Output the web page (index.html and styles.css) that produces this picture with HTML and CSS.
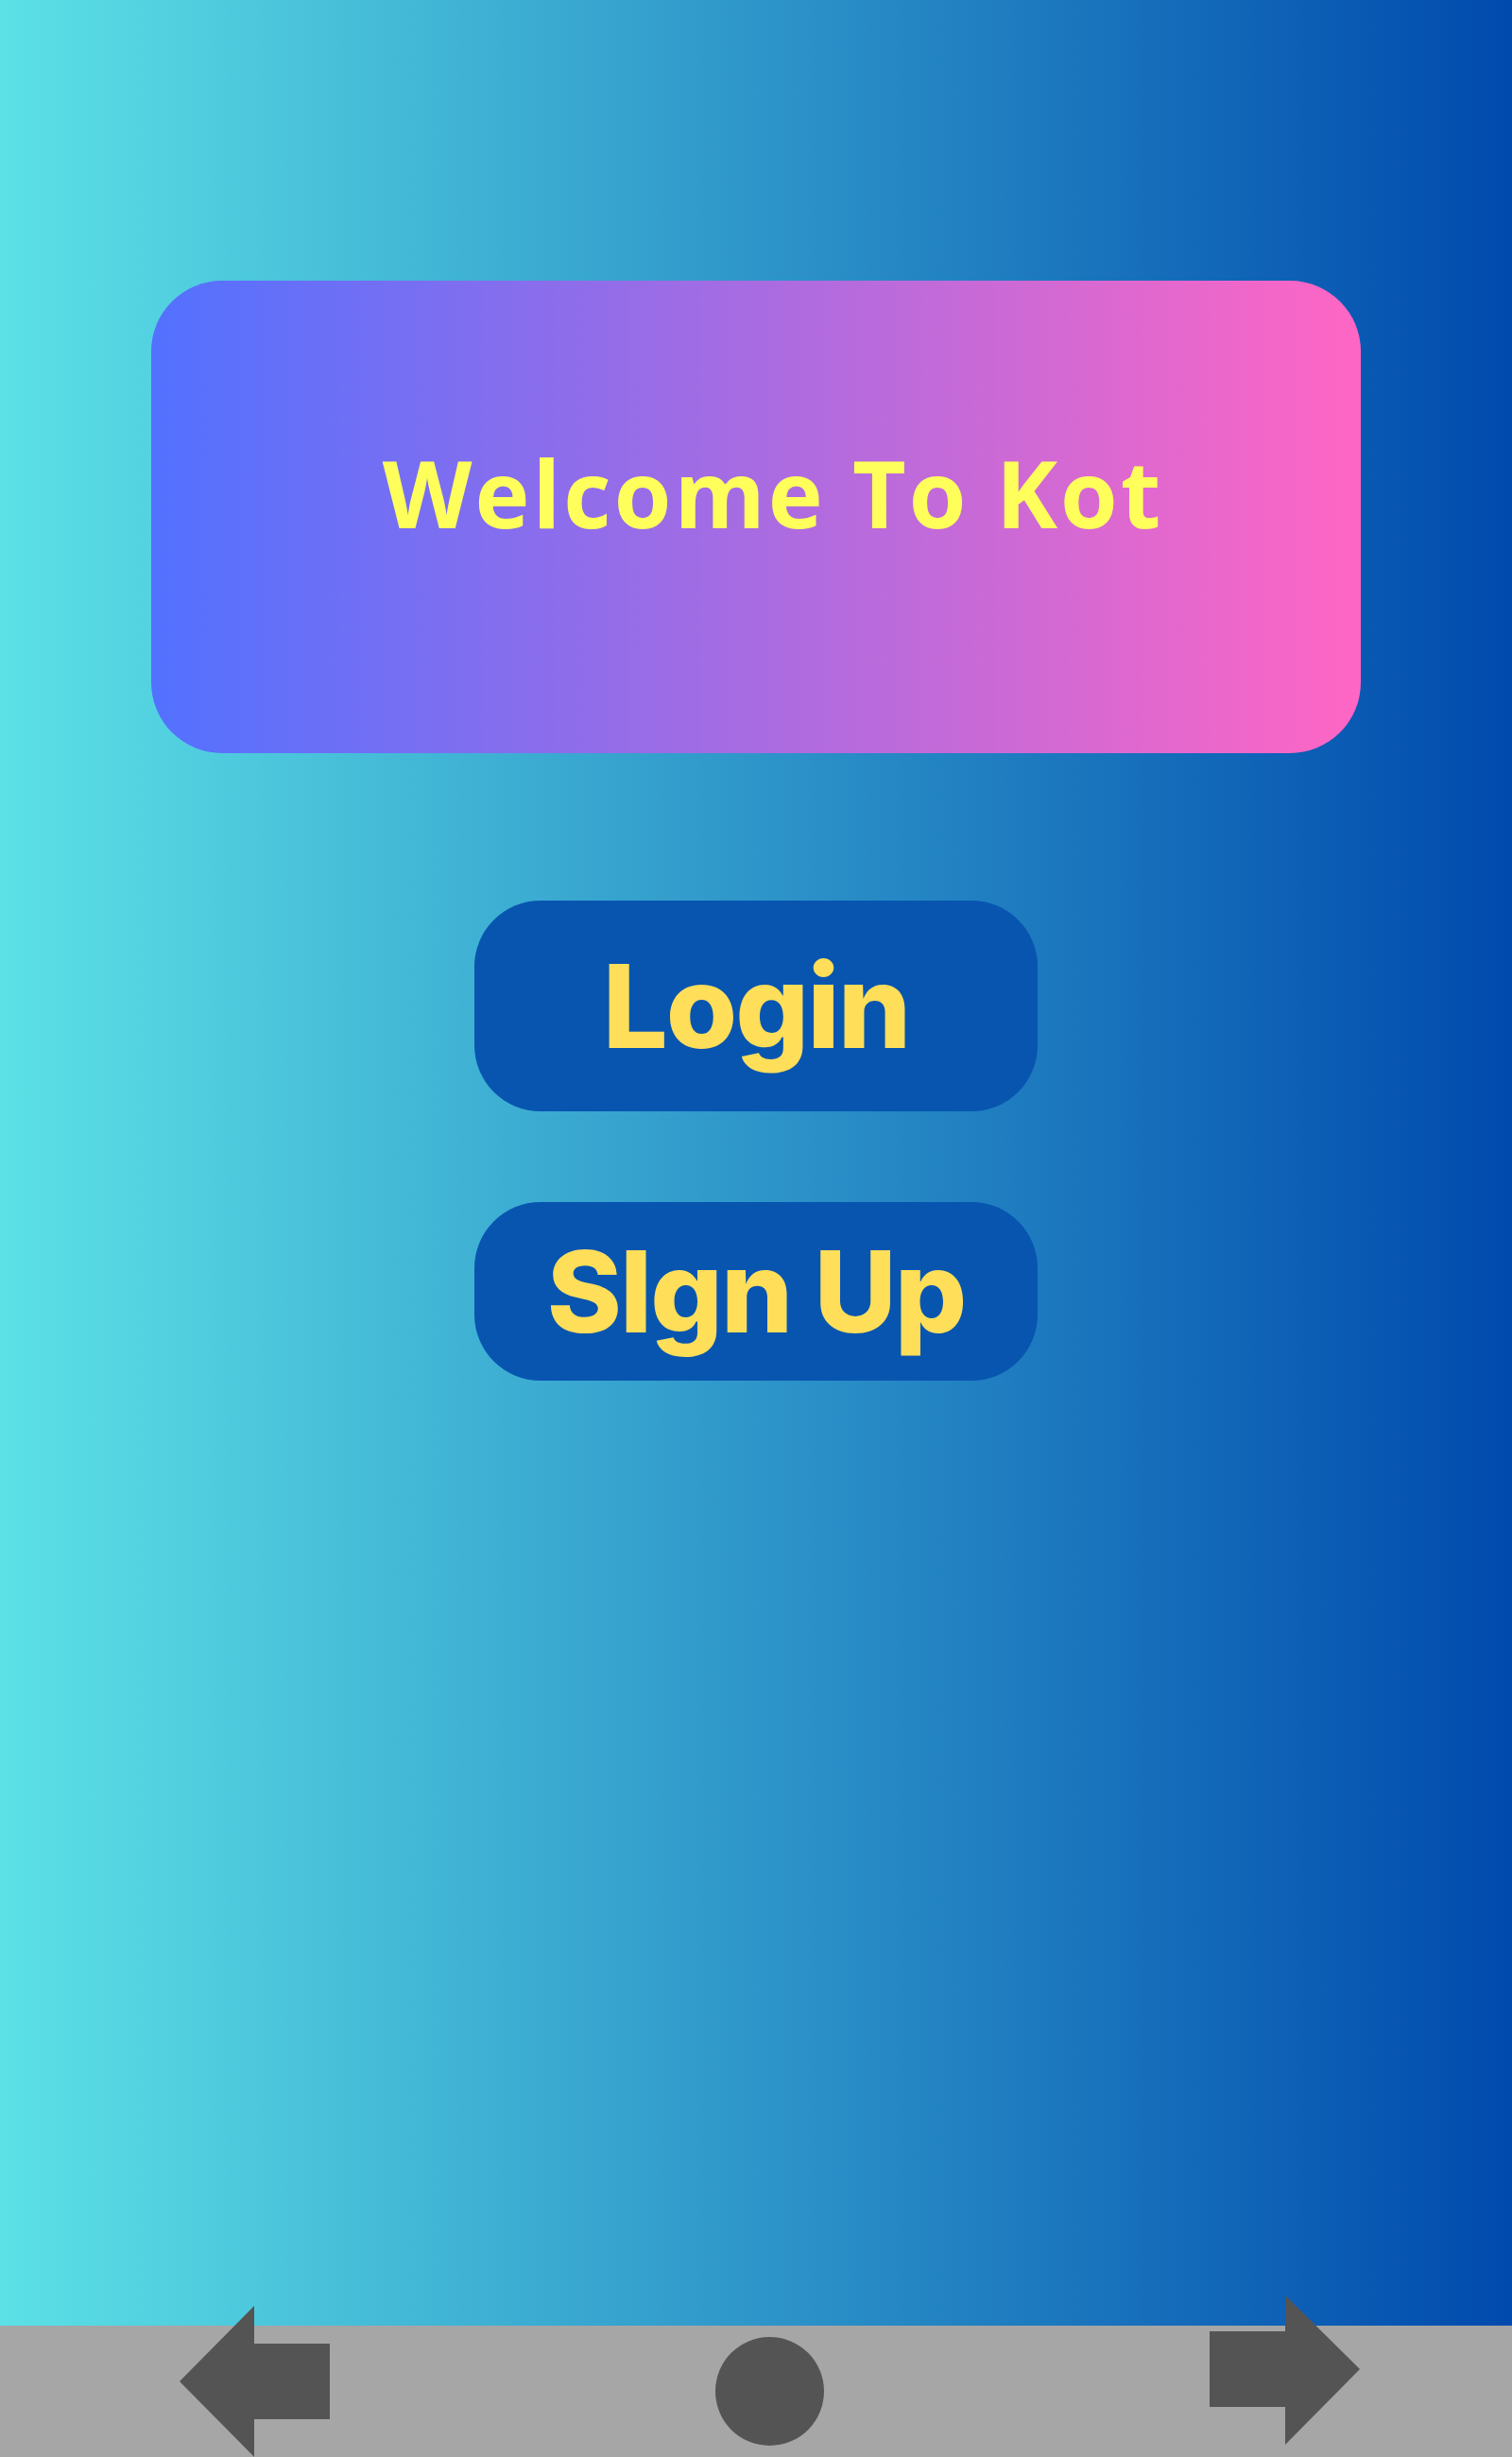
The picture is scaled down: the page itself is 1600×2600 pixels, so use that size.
FILE: index.html
```html
<!DOCTYPE html>
<html lang="en">
<head>
<meta charset="utf-8">
<title>Welcome To Kot</title>
<link rel="stylesheet" href="styles.css">
</head>
<body>
<main class="screen">
  <section class="welcome-card">
    <h1 class="welcome-title">Welcome To Kot</h1>
  </section>
  <button class="btn btn-login">Login</button>
  <button class="btn btn-signup">SIgn Up</button>
</main>
<nav class="navbar">
  <svg class="nav-back" width="159" height="160" viewBox="0 0 159 160">
    <polygon points="0,80 79,0 79,40 159,40 159,120 79,120 79,160" fill="#545454"/>
  </svg>
  <svg class="nav-home" width="115" height="115" viewBox="0 0 115 115">
    <circle cx="57.5" cy="57.5" r="57.5" fill="#545454"/>
  </svg>
  <svg class="nav-next" width="159" height="158" viewBox="0 0 159 158">
    <polygon points="159,78 80,0 80,38 0,38 0,118 80,118 80,158" fill="#545454"/>
  </svg>
</nav>
</body>
</html>
```

FILE: styles.css
```css
html, body {
  margin: 0;
  padding: 0;
}

body {
  width: 1600px;
  height: 2600px;
  overflow: hidden;
  background: linear-gradient(90deg, #5ce1e6 0%, #004aad 100%);
  font-family: "Open Sans", "Liberation Sans", sans-serif;
}

.screen {
  height: 2461px;
  display: flex;
  flex-direction: column;
  align-items: center;
  box-sizing: border-box;
  padding-top: 297px;
}

.welcome-card {
  width: 1280px;
  height: 500px;
  border-radius: 75px;
  background: linear-gradient(90deg, #5271ff 0%, #ff66c4 100%);
  display: flex;
  align-items: center;
  justify-content: center;
  box-sizing: border-box;
  padding-bottom: 52px;
  padding-left: 36px;
}

.welcome-title {
  margin: 0;
  color: #ffff5c;
  font-family: "Open Sans", "Liberation Sans", sans-serif;
  font-weight: 700;
  font-size: 98px;
  letter-spacing: 3px;
  line-height: 1;
}

.btn {
  width: 596px;
  border: none;
  border-radius: 70px;
  background: #0855b0;
  color: #ffde59;
  font-family: Inter, Roboto, sans-serif;
  font-weight: 800;
  line-height: 1;
  padding: 0;
  display: flex;
  align-items: center;
  justify-content: center;
}

.btn-login {
  margin-top: 156px;
  height: 223px;
  font-size: 122px;
  letter-spacing: -2px;
}

.btn-signup {
  margin-top: 96px;
  height: 189px;
  font-size: 120px;
  letter-spacing: -2px;
}

.navbar {
  height: 139px;
  background: #a6a6a6;
  display: flex;
  align-items: flex-start;
  gap: 408px;
  padding-left: 190px;
}

.navbar svg {
  display: block;
  flex: none;
}

.nav-back {
  margin-top: -21px;
}

.nav-home {
  margin-top: 12px;
}

.nav-next {
  margin-top: -32px;
}
```
